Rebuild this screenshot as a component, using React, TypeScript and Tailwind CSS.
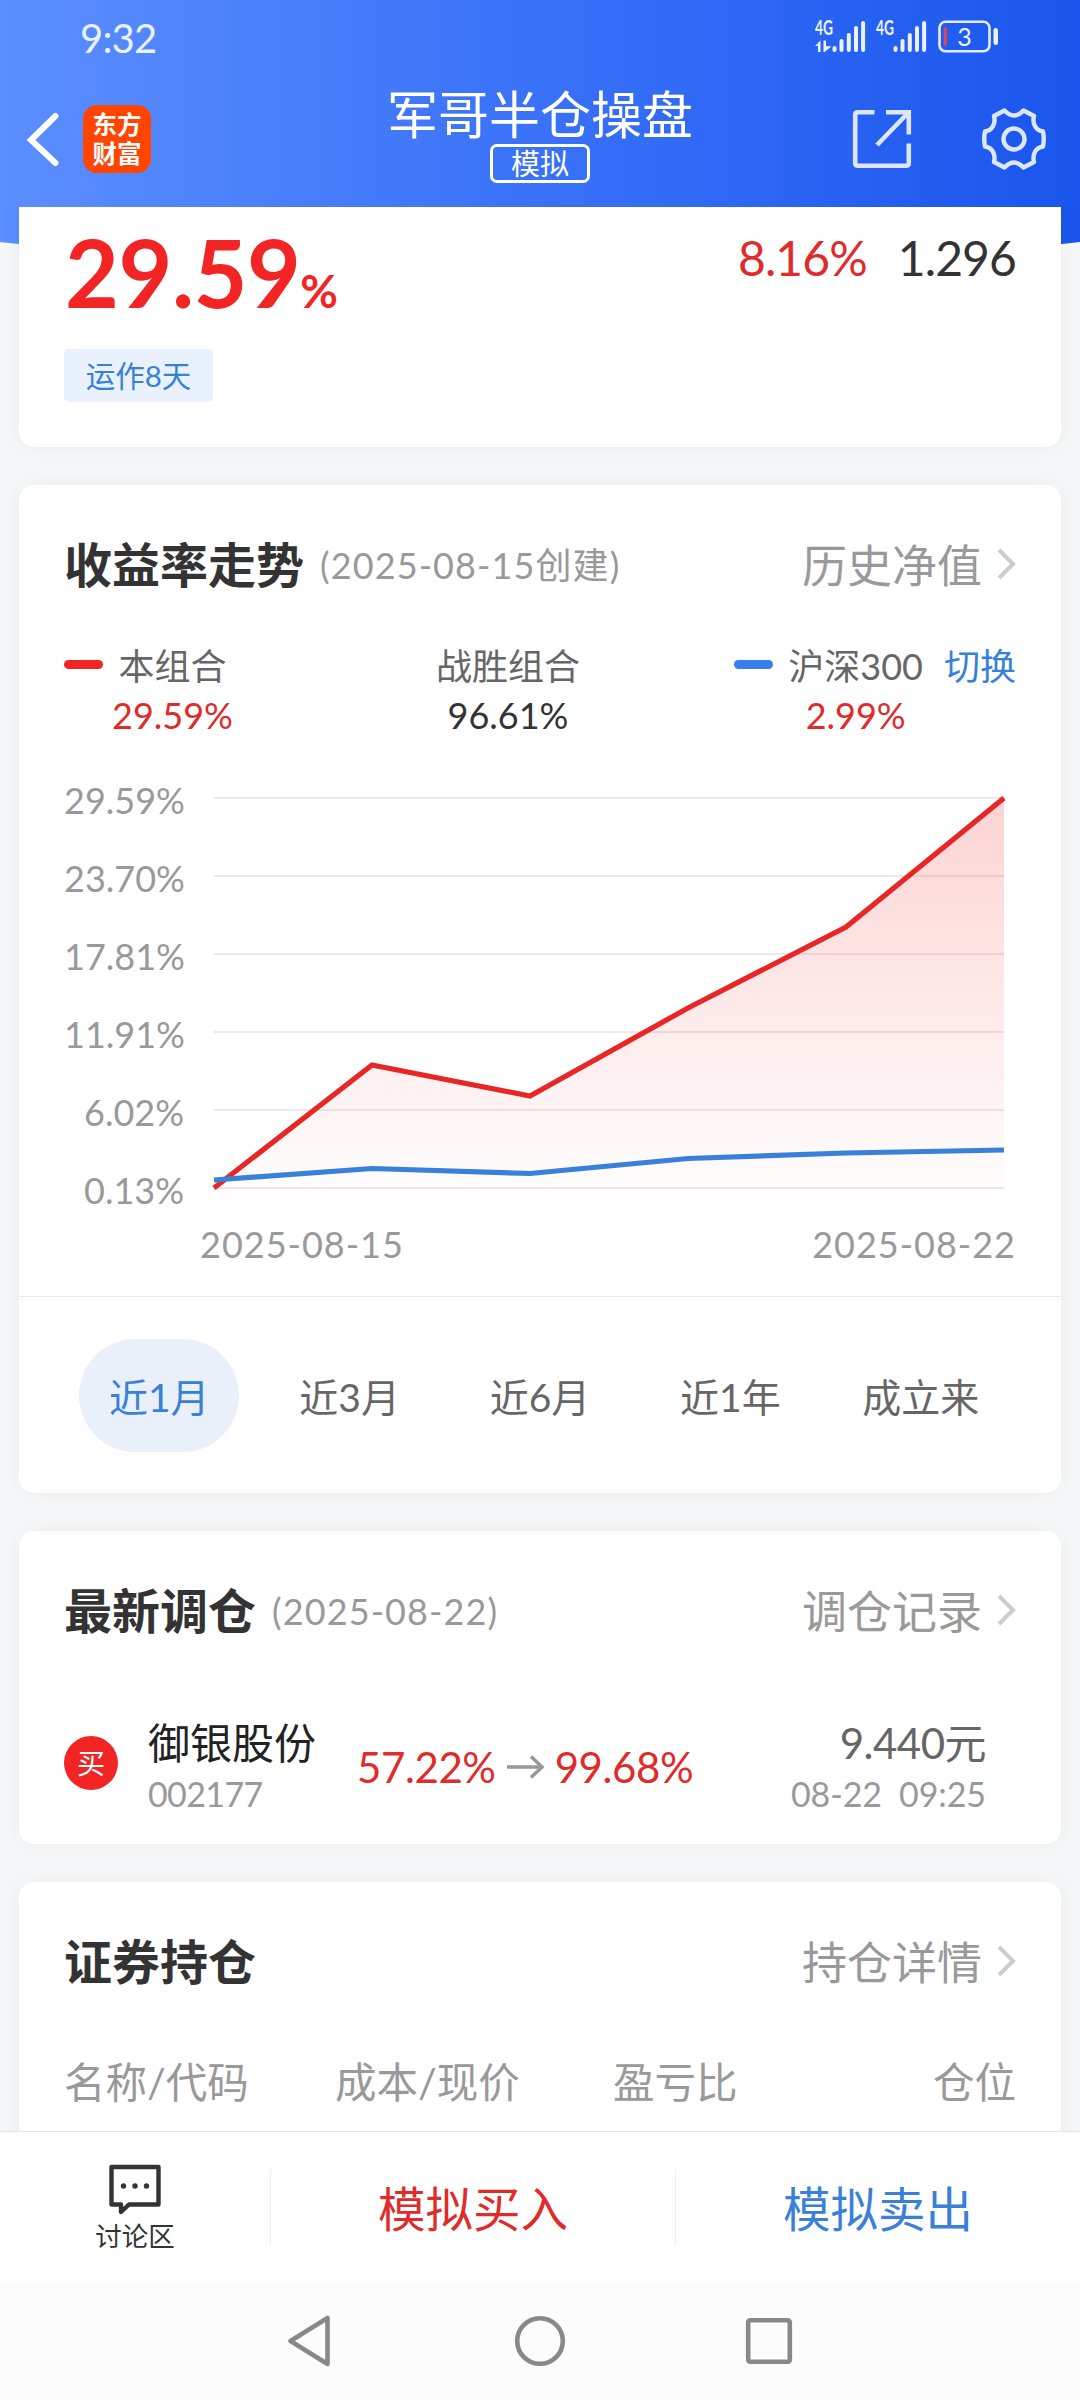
import type { ReactNode } from "react";

const axisLabels = ["29.59%", "23.70%", "17.81%", "11.91%", "6.02%", "0.13%"];
const gridLines = [10, 88, 166, 244, 322, 400];
const ranges = ["近1月", "近3月", "近6月", "近1年", "成立来"];

const portfolioLine = "0,400 158,277 316,308 474,220 632,139 790,10";
const indexLine = "0,392 158,380.5 316,385.5 474,370.5 632,365 790,362";

const SignalBars = ({ x }: { x: number }) => (
    <g fill="#eaf1ff">
        <rect x={x} y="26" width="4" height="6" rx="2" />
        <rect x={x + 7} y="19" width="4" height="13" rx="2" />
        <rect x={x + 14.3} y="13" width="4" height="19" rx="2" />
        <rect x={x + 21.5} y="6" width="4" height="26" rx="2" />
        <rect x={x + 28.6} y="1" width="4" height="31" rx="2" />
    </g>
);

const StatusBar = () => (
    <div className="flex h-[75px] items-center justify-between pl-20 pr-[79px]">
        <span className="text-[40px] leading-none tracking-[-0.8px] text-[#eaf1ff]">9:32</span>
        <svg width="186" height="46" viewBox="0 -6 186 46" className="-mt-0.5">
            <text x="0" y="15" fontSize="20" fontWeight="700" textLength="18" lengthAdjust="spacingAndGlyphs" fill="#eaf1ff">4G</text>
            {/* data up / down arrows */}
            <path d="M0 26L5.500 20.500V32H3V26ZM8.500 20.500H11V26L16.500 26.500L9.500 32H8.500Z" fill="#eaf1ff" />
            <SignalBars x={17.5} />
            <text x="61" y="15" fontSize="20" fontWeight="700" textLength="18" lengthAdjust="spacingAndGlyphs" fill="#eaf1ff">4G</text>
            <SignalBars x={78.5} />
            <rect x="124.500" y="1.800" width="50" height="29.500" rx="6" fill="none" stroke="#e3ecff" strokeWidth="2.600" />
            <rect x="128.800" y="7" width="3" height="19" rx="1.500" fill="#e0455a" />
            <text x="149.500" y="25.500" textAnchor="middle" fontSize="25" fill="#eaf1ff">3</text>
            <rect x="178.500" y="8" width="4.500" height="17" rx="2.200" fill="#eaf1ff" />
        </svg>
    </div>
);

const GearIcon = () => (
    <svg width="66" height="64" viewBox="-33 -32 66 64" fill="none" stroke="#dce7ff" strokeWidth="4.400" strokeLinejoin="round">
        <circle r="10.500" />
        <path d="M-9.500 -28.500Q0 -18.500 9.500 -28.500L20 -23C18 -15 22 -8.500 29 -7.500Q30.500 0 29 7.500C22 8.500 18 15 20 23L9.500 28.500Q0 18.500 -9.500 28.500L-20 23C-18 15 -22 8.500 -29 7.500Q-30.500 0 -29 -7.500C-22 -8.500 -18 -15 -20 -23Z" />
    </svg>
);

const ShareIcon = () => (
    <svg width="60" height="60" viewBox="0 0 60 60" fill="none" stroke="#dce7ff" strokeWidth="4.600">
        <path d="M22.500 3.200H6Q3.200 3.200 3.200 6V54Q3.200 56.800 6 56.800H54Q56.800 56.800 56.800 54V34.500" />
        <path d="M34 3.200H56.800V25.500M56 4L25 36" />
    </svg>
);

const Header = () => (
    <header className="relative z-10 h-[207px] bg-linear-to-r from-[#5b8eff] via-[#3971f8] to-[#1a55ed]">
        <StatusBar />
        <div className="grid h-[132px] grid-cols-[1fr_auto_1fr] items-start">
            <div className="flex items-center pl-[26px] pt-[30px]">
                <svg width="34" height="56" viewBox="0 0 34 56" fill="none" stroke="#fff" strokeWidth="6" strokeLinecap="round">
                    <path d="M29.500 5L5 29L29.500 52" strokeLinejoin="miter" />
                </svg>
                <div className="ml-[23px] flex h-[68px] w-[68px] flex-col items-center justify-center rounded-[14px] bg-[#ff4500] text-[24.5px] font-bold leading-[29px] text-white">
                    <span>东方</span>
                    <span>财富</span>
                </div>
            </div>
            <div className="flex flex-col items-center pt-[14px] text-white">
                <h1 className="text-[51px] leading-[52px]">军哥半仓操盘</h1>
                <span className="mt-[3px] flex h-[39px] w-[100px] items-center justify-center rounded-[7px] border-[3px] border-white text-[29px] leading-none">模拟</span>
            </div>
            <div className="flex items-center justify-end gap-[69px] pr-[33px] pt-8">
                <ShareIcon />
                <GearIcon />
            </div>
        </div>
    </header>
);

const Card = ({ className, children }: { className: string; children: ReactNode }) => (
    <section className={`relative mx-[19px] bg-white px-[45px] shadow-[0_0_24px_rgba(0,0,0,0.05)] ${className}`}>
        {children}
    </section>
);

const SectionHeader = ({ title, note, link }: { title: string; note?: string; link: string }) => (
    <div className="flex h-[60px] items-center justify-between">
        <div className="flex items-center">
            <h2 className="text-[48px] font-bold leading-none text-[#333]">{title}</h2>
            {note && <span className="ml-4 text-4xl leading-none tracking-[1.1px] text-[#999]">{note}</span>}
        </div>
        <a className="flex items-center gap-[14px] pt-[2px] text-[45px] leading-none text-[#999]">
            {link}
            <svg width="20" height="32" viewBox="0 0 20 32" fill="none" stroke="#ccc" strokeWidth="4" className="-mt-[5px]">
                <path d="M3 2L17 16L3 30" />
            </svg>
        </a>
    </div>
);

const Chart = () => (
    <div>
        <div className="flex h-[430px]">
            <div className="flex w-[120px] flex-col text-right text-4xl text-[#999]">
                {axisLabels.map((label) => (
                    <span key={label} className="h-[78px] shrink-0 leading-[24px]">{label}</span>
                ))}
            </div>
            <svg width="796" height="430" viewBox="-2 0 796 430" fill="none" className="ml-7">
                <defs>
                    <linearGradient id="area" x1="0" y1="10" x2="0" y2="424" gradientUnits="userSpaceOnUse">
                        <stop offset="0" stopColor="#f42424" stopOpacity="0.2" />
                        <stop offset="1" stopColor="#f42424" stopOpacity="0" />
                    </linearGradient>
                </defs>
                {gridLines.map((y) => (
                    <line key={y} x1="0" x2="790" y1={y} y2={y} stroke="#eaeaea" strokeWidth="2" />
                ))}
                <polygon points={`${portfolioLine} 790,424 0,424`} fill="url(#area)" />
                <polyline points={portfolioLine} stroke="#e82626" strokeWidth="5.200" />
                <polyline points={indexLine} stroke="#3880dc" strokeWidth="5.200" />
            </svg>
        </div>
        <div className="mt-[6px] flex h-10 items-center justify-between pl-[136px] text-4xl leading-none tracking-[1px] text-[#999]">
            <span>2025-08-15</span>
            <span>2025-08-22</span>
        </div>
    </div>
);

const Legend = () => (
    <div className="flex text-4xl">
        <div className="flex w-[372px]">
            <i className="mt-[18px] h-[9px] w-[39px] rounded-full bg-[#f22424]" />
            <div className="ml-[10px] flex w-[119px] flex-col items-center leading-[49px]">
                <span className="text-[#666]">本组合</span>
                <span className="text-[#e02b2b]">29.59%</span>
            </div>
        </div>
        <div className="flex flex-col items-center leading-[49px]">
            <span className="text-[#666]">战胜组合</span>
            <span className="text-[#333]">96.61%</span>
        </div>
        <div className="flex flex-1 justify-end">
            <i className="mt-[18px] h-[9px] w-[39px] rounded-full bg-[#387eec]" />
            <div className="ml-[15px] flex flex-col items-center leading-[49px]">
                <span className="text-[#666]">沪深300</span>
                <span className="text-[#e02b2b]">2.99%</span>
            </div>
            <span className="ml-[21px] leading-[49px] text-[#3880d8]">切换</span>
        </div>
    </div>
);

const TradeRow = () => (
    <div className="mt-[75px] flex h-[102px] items-center">
        <span className="mb-2 flex h-[54px] w-[54px] items-center justify-center rounded-full bg-[#f22424] text-[28px] leading-none text-white">买</span>
        <div className="ml-[30px] w-[209px]">
            <div className="text-[42px] leading-[54px] text-[#222]">御银股份</div>
            <div className="text-[34px] leading-[48px] tracking-[-0.6px] text-[#999]">002177</div>
        </div>
        <div className="flex items-center gap-[11px] text-[42px] leading-none tracking-[-0.4px] text-[#e02b2b]">
            <span>57.22%</span>
            <svg width="37" height="26" viewBox="0 0 37 26" fill="none" stroke="#999" strokeWidth="3.500">
                <path d="M0 13H35M24 2.500L35 13L24 23.500" />
            </svg>
            <span>99.68%</span>
        </div>
        <div className="ml-auto mr-[30px] text-right">
            <div className="text-[42px] leading-[54px] tracking-[-0.5px] text-[#666]">9.440元</div>
            <div className="whitespace-pre text-[34px] leading-[48px] tracking-[-0.1px] text-[#999]">08-22  09:25</div>
        </div>
    </div>
);

const BottomBar = () => (
    <div className="flex h-[151px] items-center border-t border-[#e6e6e6] bg-white">
        <div className="flex w-[270px] flex-col items-center">
            <svg width="54" height="52" viewBox="0 0 54 52" fill="none" stroke="#333" strokeWidth="4.400" strokeLinejoin="round">
                <path d="M3.500 3H50.500V40.500H21L13 48V40.500H3.500Z" />
                <g fill="#333" stroke="none">
                    <circle cx="15.500" cy="22" r="2.700" />
                    <circle cx="27" cy="22" r="2.700" />
                    <circle cx="38.500" cy="22" r="2.700" />
                </g>
            </svg>
            <span className="mt-[7px] text-[26.5px] leading-none text-[#333]">讨论区</span>
        </div>
        <button className="h-[75px] w-[405px] border-l border-[#eee] pt-[3px] text-[47.5px] leading-none text-[#e02b2b]">模拟买入</button>
        <button className="h-[75px] w-[405px] border-l border-[#eee] pt-[3px] text-[47.5px] leading-none text-[#3880d8]">模拟卖出</button>
    </div>
);

const SystemNav = () => (
    <div className="flex h-[118px] items-center bg-[#fcfcfc] pl-[286px]">
        <svg width="46" height="52" viewBox="0 0 46 52" fill="none" stroke="#888" strokeWidth="4.600" strokeLinejoin="round">
            <path d="M41.500 3V49L4.500 26Z" />
        </svg>
        <svg width="52" height="52" viewBox="0 0 52 52" fill="none" stroke="#888" strokeWidth="4.600" className="ml-[182px]">
            <circle cx="26" cy="26" r="22.800" />
        </svg>
        <svg width="48" height="48" viewBox="0 0 48 48" fill="none" stroke="#888" strokeWidth="4.600" className="ml-[179px]">
            <rect x="3.200" y="3.200" width="41.600" height="41.600" rx="2" />
        </svg>
    </div>
);

export default function App() {
    return (
        <div className="flex h-[2400px] w-[1080px] flex-col overflow-hidden bg-[#f5f7f9] font-['Lato','Noto_Sans_CJK_SC',sans-serif]">
            <Header />
            <main className="relative flex h-[1924px] flex-col gap-[38px] overflow-hidden">
                {/* curved tail of the header behind the first card */}
                <svg width="1080" height="70" viewBox="0 0 1080 70" className="absolute left-0 top-0">
                    <defs>
                        <linearGradient id="tail">
                            <stop offset="0" stopColor="#5b8eff" />
                            <stop offset="0.5" stopColor="#3971f8" />
                            <stop offset="1" stopColor="#1a55ed" />
                        </linearGradient>
                    </defs>
                    <path d="M0 0H1080V35Q540 97 0 35Z" fill="url(#tail)" />
                </svg>

                <Card className="h-[240px] shrink-0 rounded-b-[15px]">
                    <div className="flex h-[112px] justify-between">
                        <div className="flex items-baseline pl-px pt-[19px] font-bold text-[#f22424]">
                            <span className="text-[93px] leading-[92px] tracking-[-0.5px]">29.59</span>
                            <span className="text-[46px] leading-none">%</span>
                        </div>
                        <div className="flex gap-[31px] pt-6 text-[48px] leading-[54px] tracking-[-0.9px]">
                            <span className="text-[#e02b2b]">8.16%</span>
                            <span className="text-[#333]">1.296</span>
                        </div>
                    </div>
                    <span className="mt-[30px] flex h-[53px] w-[149px] items-center justify-center rounded-[5px] bg-[#e9f2fc] pt-px text-[29.5px] leading-none text-[#3880d8]">运作8天</span>
                </Card>

                <Card className="h-[1008px] shrink-0 rounded-[15px] pt-[50px]">
                    <SectionHeader title="收益率走势" note="(2025-08-15创建)" link="历史净值" />
                    <div className="mt-[47px]"><Legend /></div>
                    <div className="mt-[48px]"><Chart /></div>
                    <div className="-mx-[45px] mt-8 flex border-t border-[#e8e8e8] px-[45px] pt-[42px]">
                        {ranges.map((range, index) => (
                            <button key={range} className="flex flex-1 justify-center">
                                <span className={`flex h-[113px] w-40 items-center justify-center rounded-full pt-[3px] text-[39px] leading-none ${index === 0 ? "bg-[#e9f0f9] text-[#3880d8]" : "text-[#666]"}`}>
                                    {range}
                                </span>
                            </button>
                        ))}
                    </div>
                </Card>

                <Card className="h-[313px] shrink-0 rounded-[15px] pt-[50px]">
                    <SectionHeader title="最新调仓" note="(2025-08-22)" link="调仓记录" />
                    <TradeRow />
                </Card>

                <Card className="h-[300px] shrink-0 rounded-t-[15px] pt-[50px]">
                    <SectionHeader title="证券持仓" link="持仓详情" />
                    <div className="mt-[66px] flex h-[50px] items-center text-[41.5px] leading-none text-[#999]">
                        <span className="w-[271px]">名称/代码</span>
                        <span className="w-[278px]">成本/现价</span>
                        <span>盈亏比</span>
                        <span className="ml-auto">仓位</span>
                    </div>
                </Card>
            </main>
            <BottomBar />
            <SystemNav />
        </div>
    );
}
